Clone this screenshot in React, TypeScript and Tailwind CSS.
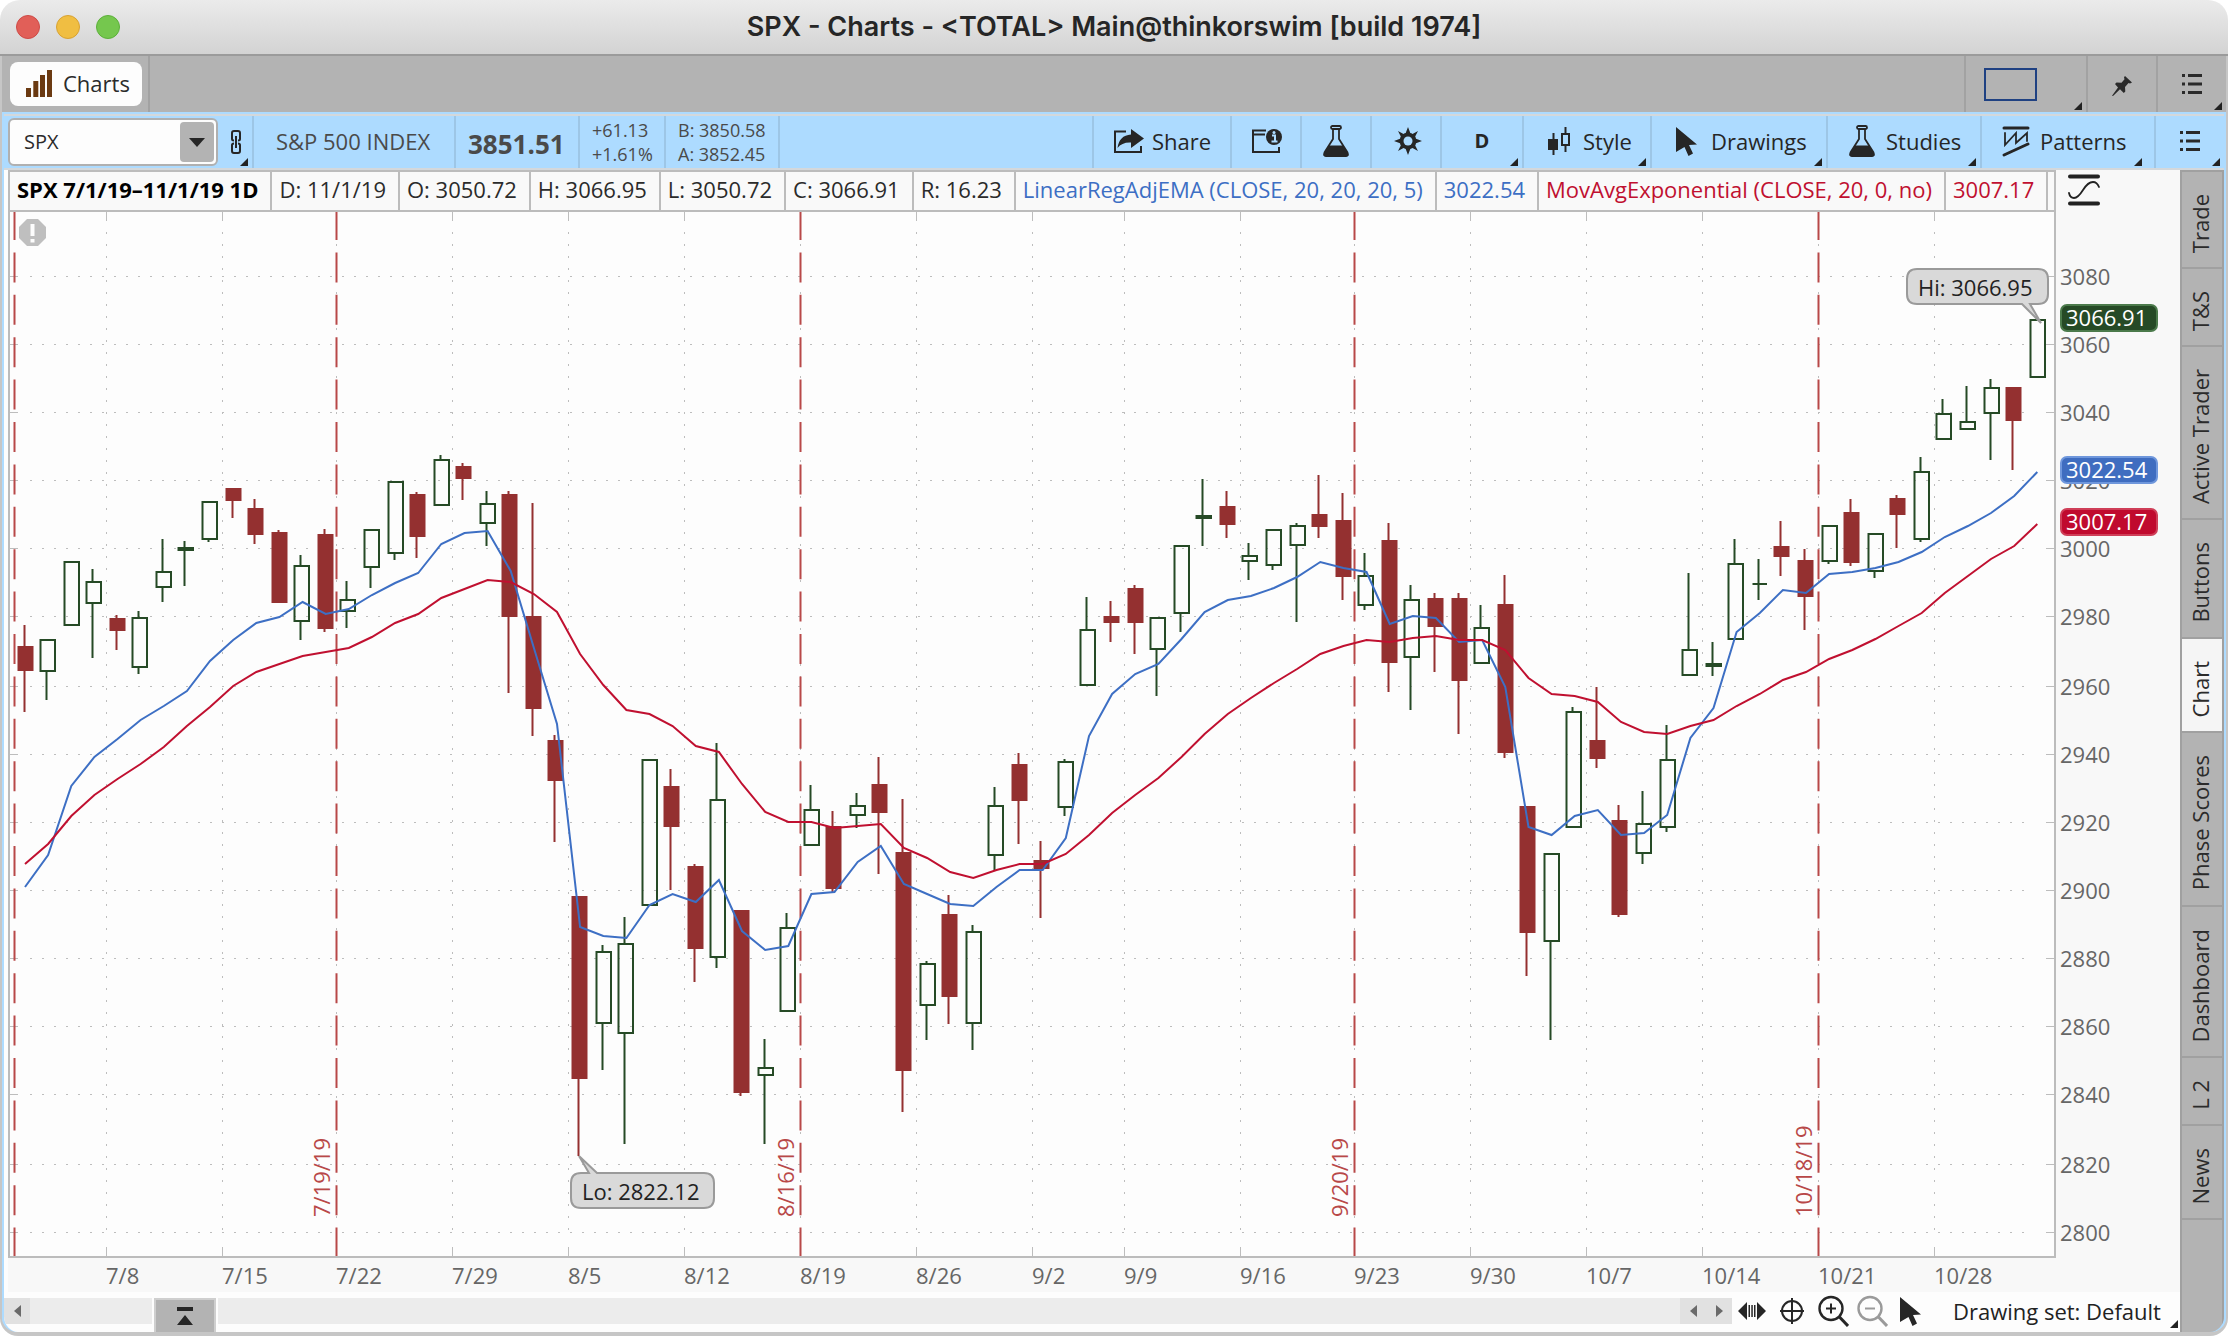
import type { ReactNode } from "react";

type Candle = {
  up: boolean;
  high: number;
  top: number;
  bottom: number;
  low: number;
};

const UP = "#264a26";
const DOWN = "#943030";
const BLUE = "#3d6fc4";
const RED = "#c01030";
const GRID = "#bdbdbd";

// direction, high, body top, body bottom, low (y of the plot)
const RAW: [string, number, number, number, number][] = [
  ["d", 625, 646, 671, 712],
  ["u", 640, 640, 671, 700],
  ["u", 562, 562, 625, 625],
  ["u", 569, 582, 603, 658],
  ["d", 615, 618, 631, 650],
  ["u", 611, 618, 667, 674],
  ["u", 539, 572, 587, 602],
  ["u", 541, 548, 550, 586],
  ["u", 502, 502, 539, 542],
  ["d", 488, 488, 501, 518],
  ["d", 499, 508, 535, 544],
  ["d", 530, 532, 603, 603],
  ["u", 555, 566, 621, 640],
  ["d", 529, 534, 629, 632],
  ["u", 581, 600, 611, 628],
  ["u", 529, 530, 567, 588],
  ["u", 482, 482, 553, 560],
  ["d", 492, 494, 537, 558],
  ["u", 455, 460, 505, 506],
  ["d", 463, 466, 479, 500],
  ["u", 491, 504, 523, 546],
  ["d", 491, 494, 617, 693],
  ["d", 503, 616, 709, 736],
  ["d", 735, 740, 781, 842],
  ["d", 896, 896, 1079, 1156],
  ["u", 945, 952, 1023, 1070],
  ["u", 917, 944, 1033, 1144],
  ["u", 759, 760, 905, 905],
  ["d", 769, 786, 827, 890],
  ["d", 864, 866, 949, 982],
  ["u", 743, 800, 957, 968],
  ["d", 910, 910, 1093, 1096],
  ["u", 1039, 1068, 1075, 1144],
  ["u", 913, 928, 1011, 1011],
  ["u", 785, 810, 845, 845],
  ["d", 811, 826, 889, 892],
  ["u", 793, 806, 815, 828],
  ["d", 757, 784, 813, 874],
  ["d", 799, 852, 1071, 1112],
  ["u", 961, 964, 1005, 1040],
  ["d", 895, 914, 997, 1024],
  ["u", 925, 932, 1023, 1050],
  ["u", 787, 806, 855, 870],
  ["d", 753, 764, 801, 844],
  ["d", 841, 860, 869, 918],
  ["u", 759, 762, 807, 816],
  ["u", 597, 630, 685, 685],
  ["d", 601, 616, 623, 642],
  ["d", 585, 588, 623, 654],
  ["u", 618, 618, 649, 696],
  ["u", 546, 546, 613, 632],
  ["u", 479, 516, 518, 546],
  ["d", 491, 506, 525, 538],
  ["u", 543, 556, 561, 580],
  ["u", 529, 530, 565, 570],
  ["u", 523, 526, 545, 622],
  ["d", 475, 514, 527, 538],
  ["d", 493, 520, 577, 600],
  ["u", 553, 576, 605, 610],
  ["d", 523, 540, 663, 692],
  ["u", 585, 600, 657, 710],
  ["d", 593, 598, 627, 672],
  ["d", 593, 598, 681, 734],
  ["u", 605, 628, 663, 663],
  ["d", 575, 604, 753, 758],
  ["d", 806, 806, 933, 976],
  ["u", 853, 854, 941, 1040],
  ["u", 707, 712, 827, 827],
  ["d", 687, 740, 759, 768],
  ["d", 805, 820, 915, 917],
  ["u", 791, 824, 853, 864],
  ["u", 725, 760, 827, 832],
  ["u", 573, 650, 675, 675],
  ["u", 642, 664, 666, 676],
  ["u", 539, 564, 639, 639],
  ["u", 559, 584, 584, 600],
  ["d", 521, 546, 557, 576],
  ["d", 549, 560, 597, 630],
  ["u", 525, 526, 561, 564],
  ["d", 499, 512, 563, 566],
  ["u", 533, 534, 571, 578],
  ["d", 495, 498, 515, 548],
  ["u", 457, 472, 539, 542],
  ["u", 399, 414, 439, 439],
  ["u", 386, 422, 429, 430],
  ["u", 379, 388, 413, 460],
  ["d", 387, 387, 421, 470],
  ["u", 320, 320, 377, 377],
];

const CANDLES: Candle[] = RAW.map(([dir, high, top, bottom, low]) => ({
  up: dir === "u",
  high,
  top,
  bottom,
  low,
}));

const LINEAR_REG = [
  887, 855, 786, 757, 739, 720, 706, 691, 661, 640, 623, 617, 602, 614, 609, 595, 583, 573, 544, 533, 531, 571,
  648, 724, 927, 936, 938, 905, 894, 902, 880, 931, 950, 946, 894, 892, 862, 846, 884, 894, 904, 906, 887, 870,
  870, 838, 736, 694, 674, 664, 639, 612, 600, 596, 588, 577, 562, 568, 572, 624, 616, 618, 642, 640, 687, 827,
  835, 816, 810, 835, 833, 815, 738, 708, 632, 613, 590, 593, 574, 572, 568, 562, 552, 537, 526, 513, 496, 472,
];

const MOV_AVG = [
  864, 844, 816, 795, 779, 764, 747, 726, 707, 686, 672, 664, 656, 652, 648, 637, 623, 614, 598, 589, 580, 582,
  594, 612, 654, 685, 710, 714, 726, 746, 752, 784, 812, 822, 822, 828, 826, 824, 848, 858, 872, 878, 870, 864,
  864, 854, 835, 813, 795, 778, 757, 734, 714, 698, 683, 669, 654, 646, 640, 642, 638, 636, 640, 640, 650, 678,
  694, 696, 702, 722, 732, 734, 726, 720, 706, 694, 680, 672, 659, 650, 639, 626, 613, 593, 576, 559, 546, 524,
];

const WEEKS: [number, string][] = [
  [106, "7/8"],
  [222, "7/15"],
  [336, "7/22"],
  [452, "7/29"],
  [568, "8/5"],
  [684, "8/12"],
  [800, "8/19"],
  [916, "8/26"],
  [1032, "9/2"],
  [1124, "9/9"],
  [1240, "9/16"],
  [1354, "9/23"],
  [1470, "9/30"],
  [1586, "10/7"],
  [1702, "10/14"],
  [1818, "10/21"],
  [1934, "10/28"],
];

const PRICES: [number, number][] = [
  [3080, 276],
  [3060, 344],
  [3040, 412],
  [3020, 480],
  [3000, 548],
  [2980, 616],
  [2960, 686],
  [2940, 754],
  [2920, 822],
  [2900, 890],
  [2880, 958],
  [2860, 1026],
  [2840, 1094],
  [2820, 1164],
  [2800, 1232],
];

const EXPIRATIONS: [number, string][] = [
  [14, ""],
  [336, "7/19/19"],
  [800, "8/16/19"],
  [1354, "9/20/19"],
  [1818, "10/18/19"],
];

const STATUS = [
  { text: "SPX 7/1/19–11/1/19 1D", className: "font-bold text-black" },
  { text: "D: 11/1/19", className: "text-[#2b2b2b]" },
  { text: "O: 3050.72", className: "text-[#2b2b2b]" },
  { text: "H: 3066.95", className: "text-[#2b2b2b]" },
  { text: "L: 3050.72", className: "text-[#2b2b2b]" },
  { text: "C: 3066.91", className: "text-[#2b2b2b]" },
  { text: "R: 16.23", className: "text-[#2b2b2b]" },
  { text: "LinearRegAdjEMA (CLOSE, 20, 20, 20, 5)", className: "text-[#3d6fc4]" },
  { text: "3022.54", className: "text-[#3d6fc4]" },
  { text: "MovAvgExponential (CLOSE, 20, 0, no)", className: "text-[#c01030]" },
  { text: "3007.17", className: "text-[#c01030]" },
];

const SIDE_TABS = ["Trade", "T&S", "Active Trader", "Buttons", "Chart", "Phase Scores", "Dashboard", "L 2", "News"];

const candleX = (i: number) => Math.floor((24 + i * 23.13) / 2) * 2;

const toPoints = (values: number[]) => values.map((y, i) => `${(25 + i * 23.13).toFixed(1)},${y}`).join(" ");

function Corner({ className = "right-1 bottom-0.5" }: { className?: string }) {
  return (
    <svg className={`absolute size-2 ${className}`} viewBox="0 0 8 8" fill="#222" aria-hidden="true">
      <path d="M8 0V8H0z" />
    </svg>
  );
}

function ListIcon() {
  return (
    <svg width="20" height="20" viewBox="0 0 20 20" fill="#2a2a2a" aria-hidden="true">
      <path d="M0 0h3v3H0zM6 0h14v3H6zM0 8.500h3v3H0zM6 8.500h14v3H6zM0 17h3v3H0zM6 17h14v3H6z" />
    </svg>
  );
}

function FlaskIcon() {
  return (
    <svg width="28" height="32" viewBox="0 0 28 32" fill="none" stroke="#262626" strokeWidth="1.800" aria-hidden="true">
      <rect x="9" y="1" width="10" height="3" rx="1.500" />
      <path d="M11 4v10L2.500 27.500Q1 31 4 31h20q3 0 1.500-3.500L17 14V4" />
      <path d="M7.500 21.500h13l4.500 7q.5 2-1.500 2h-19q-2 0-1.500-2z" fill="#262626" />
    </svg>
  );
}

function PointerIcon() {
  return (
    <svg width="21" height="29" viewBox="0 0 21 29" fill="#262626" aria-hidden="true">
      <path d="M0 0L21 17.500l-8 .5 4 8.500-4.500 2.500-4-9L0 25z" />
    </svg>
  );
}

function ToolButton({
  label,
  width,
  corner,
  cornerClass,
  children,
}: {
  label: string;
  width: string;
  corner?: boolean;
  cornerClass?: string;
  children: ReactNode;
}) {
  return (
    <button
      type="button"
      aria-label={label}
      className={`relative flex shrink-0 items-center border-l-2 border-[#9dc6e6] pb-0.5 text-[#262626] ${width}`}
    >
      {children}
      {corner && <Corner className={cornerClass} />}
    </button>
  );
}

function TitleBar() {
  return (
    <header className="relative flex h-14 items-center justify-center rounded-t-[20px] border-b-2 border-[#9b9b9b] bg-gradient-to-b from-[#ebebeb] to-[#d3d3d3]">
      <div className="absolute left-4 flex gap-4">
        <button type="button" aria-label="Close" className="size-6 rounded-full border border-[#ce4b47] bg-[#e15f58]" />
        <button type="button" aria-label="Minimize" className="size-6 rounded-full border border-[#d8a233] bg-[#f0be42]" />
        <button type="button" aria-label="Zoom" className="size-6 rounded-full border border-[#5cb03a] bg-[#75c74e]" />
      </div>
      <h1 className="font-['Inter',sans-serif] text-[27px] leading-8 font-semibold text-[#262626]">
        SPX - Charts - &lt;TOTAL&gt; Main@thinkorswim [build 1974]
      </h1>
    </header>
  );
}

function TabBar() {
  return (
    <nav className="flex h-14 items-stretch bg-[#b3b3b3]">
      <div className="flex w-[148px] items-center border-r-2 border-[#a2a2a2] pl-2">
        <button
          type="button"
          className="flex h-11 w-[132px] items-center gap-2.5 rounded-lg bg-[#fdfdfd] pb-0.5 pl-4 text-[#2b2b2b]"
        >
          <svg width="27" height="27" viewBox="0 0 27 27" fill="#6b3a12" aria-hidden="true">
            <path d="M0 18h5v9H0zM7.300 11h5v16h-5zM14 5h5v22h-5zM21 0h5v27h-5z" />
          </svg>
          Charts
        </button>
      </div>
      <div className="flex-1" />
      <button type="button" aria-label="Layout" className="relative w-[122px] border-l-2 border-[#a2a2a2] pl-[18px]">
        <svg width="53" height="33" viewBox="0 0 53 33" fill="none" stroke="#1f4182" strokeWidth="2" aria-hidden="true">
          <rect x="1" y="1" width="51" height="31" />
        </svg>
        <Corner />
      </button>
      <button type="button" aria-label="Pin" className="flex w-[70px] items-center justify-center border-l-2 border-[#a2a2a2] pt-1">
        <svg width="20" height="20" viewBox="0 0 20 20" fill="#2a2a2a" aria-hidden="true">
          <path d="M13 0l7 6.500-2 1-1.500-.5-3.500 4 .3 4.500-1.500 1.500L8 13.200 1 20l-1-.3L6 11.500 3 8l1.500-1.500 5 .3 3-3.600-.5-2z" />
        </svg>
      </button>
      <button type="button" aria-label="Menu" className="relative flex w-[70px] items-center justify-center border-l-2 border-[#a2a2a2]">
        <ListIcon />
        <Corner />
      </button>
    </nav>
  );
}

function Toolbar() {
  return (
    <div className="flex h-14 items-stretch border-y-2 border-[#d4d8db] bg-[#addbff]">
      <div className="relative flex w-[250px] shrink-0 items-center border-r-2 border-[#9dc6e6] pl-1">
        <div className="flex h-[48px] w-[210px] items-center rounded-md border-2 border-[#b0b0b0] bg-[#fdfdfd] pr-0.5">
          <input
            aria-label="Symbol"
            defaultValue="SPX"
            className="min-w-0 flex-1 bg-transparent pl-3.5 text-xl text-[#2b2b2b] outline-none"
          />
          <button type="button" aria-label="Symbols" className="flex h-10 w-[34px] items-center justify-center rounded-sm bg-[#b3b3b3]">
            <svg width="16" height="9" viewBox="0 0 16 9" fill="#262626" aria-hidden="true">
              <path d="M0 0h16L8 9z" />
            </svg>
          </button>
        </div>
        <button type="button" aria-label="Link symbol" className="ml-3">
          <svg width="12" height="24" viewBox="0 0 12 24" fill="none" stroke="#262626" strokeWidth="2" aria-hidden="true">
            <path d="M2 9V3q0-2 2-2h4q2 0 2 2v6q0 1.500-2 1.500M4 10.500Q2 10.500 2 9M2 15v6q0 2 2 2h4q2 0 2-2v-6q0-1.500-2-1.500M4 13.500Q2 13.500 2 15M6 6v12" />
          </svg>
        </button>
        <Corner />
      </div>
      <div className="flex w-[202px] shrink-0 items-center border-r-2 border-[#9dc6e6] pb-0.5 pl-[22px] text-[#4a4a4a]">
        S&amp;P 500 INDEX
      </div>
      <div className="flex w-[124px] shrink-0 items-center border-r-2 border-[#9dc6e6] pt-1 pl-3 text-[26px] font-bold text-[#4a4a4a]">
        3851.51
      </div>
      <div className="flex w-[86px] shrink-0 flex-col justify-center border-r-2 border-[#9dc6e6] pl-3 text-lg leading-6 text-[#4a4a4a]">
        <span>+61.13</span>
        <span>+1.61%</span>
      </div>
      <div className="flex w-[114px] shrink-0 flex-col justify-center border-r-2 border-[#9dc6e6] pl-3 text-lg leading-6 text-[#4a4a4a]">
        <span>B: 3850.58</span>
        <span>A: 3852.45</span>
      </div>
      <div className="flex-1" />
      <ToolButton label="Share" width="w-[138px] gap-2 pl-5">
        <svg width="30" height="24" viewBox="0 0 30 24" aria-hidden="true">
          <path d="M12 2.500H1V23h26v-6" fill="none" stroke="#262626" strokeWidth="2" />
          <path d="M17 0l13 9.500L17 19v-5.500Q8 13 3.500 19 5 6.500 17 5.500z" fill="#262626" />
        </svg>
        Share
      </ToolButton>
      <ToolButton label="Symbol info" width="w-[70px] pl-5">
        <svg width="30" height="24" viewBox="0 0 30 24" aria-hidden="true">
          <path d="M14 1.500H1V23h26v-5M1 5.500h12" fill="none" stroke="#262626" strokeWidth="2" />
          <circle cx="22" cy="8" r="8" fill="#262626" />
          <path d="M20 6.500h3v6M19.500 12.500h6" fill="none" stroke="#addbff" strokeWidth="2" />
          <circle cx="22" cy="3.500" r="1.500" fill="#addbff" />
        </svg>
      </ToolButton>
      <ToolButton label="Edit studies" width="w-[70px] pl-5">
        <FlaskIcon />
      </ToolButton>
      <ToolButton label="Settings" width="w-[70px] pl-[22px]">
        <svg width="28" height="28" viewBox="0 0 28 28" aria-hidden="true">
          <path
            d="M14 0l2.300 6q1.200.3 2.200.9L24 4l-2.800 5.500q.6 1 .8 2.200L28 14l-6 2.300q-.2 1.200-.8 2.200L24 24l-5.500-2.900q-1 .6-2.200.9L14 28l-2.300-6q-1.200-.3-2.200-.9L4 24l2.800-5.500q-.6-1-.8-2.200L0 14l6-2.300q.2-1.200.8-2.200L4 4l5.500 2.900q1-.6 2.200-.9z"
            fill="#262626"
          />
          <circle cx="14" cy="14" r="4.500" fill="#addbff" />
        </svg>
      </ToolButton>
      <ToolButton label="Aggregation period: day" width="w-[82px] justify-center" corner>
        <span className="text-xl font-bold">D</span>
      </ToolButton>
      <ToolButton label="Style" width="w-[128px] gap-3 pl-6" corner>
        <svg width="23" height="28" viewBox="0 0 23 28" aria-hidden="true">
          <path d="M5.500 6v22" stroke="#262626" strokeWidth="2" />
          <rect y="12" width="10" height="11" fill="#262626" />
          <path d="M17.500 0v7M17.500 18v7M14 7h7v11h-7z" fill="none" stroke="#262626" strokeWidth="2" />
        </svg>
        Style
      </ToolButton>
      <ToolButton label="Drawings" width="w-[176px] gap-3.5 pl-6" corner>
        <PointerIcon />
        Drawings
      </ToolButton>
      <ToolButton label="Studies" width="w-[154px] gap-2.5 pl-5" corner>
        <FlaskIcon />
        Studies
      </ToolButton>
      <ToolButton label="Patterns" width="w-[174px] gap-2.5 pl-5" corner cornerClass="right-3 bottom-0.5">
        <svg width="28" height="32" viewBox="0 0 28 32" fill="none" stroke="#262626" strokeLinecap="round" aria-hidden="true">
          <path d="M2 3h24M2 30l24-11" strokeWidth="3" />
          <path d="M3 8v12L14 8v10L25 8v8" strokeWidth="1.800" />
        </svg>
        Patterns
      </ToolButton>
      <ToolButton label="Chart menu" width="w-[70px] pl-6" corner>
        <ListIcon />
      </ToolButton>
    </div>
  );
}

function StatusRow() {
  return (
    <div className="flex bg-[#f8f8f8]">
      <div className="w-1 bg-[#fdfdfd]" />
      <div className="flex h-[42px] min-w-0 flex-1 items-stretch border-2 border-[#bcbcbc] bg-[#f9f9f9]">
        {STATUS.map((cell) => (
          <div
            key={cell.text}
            className={`flex shrink-0 items-center border-r-2 border-[#bcbcbc] pr-3 pb-1 pl-[7px] whitespace-nowrap ${cell.className}`}
          >
            {cell.text}
          </div>
        ))}
      </div>
      <button type="button" aria-label="Pattern preview" className="w-[124px] pb-0.5 pl-3">
        <svg width="32" height="32" viewBox="0 0 32 32" fill="none" stroke="#222" strokeLinecap="round" aria-hidden="true">
          <path d="M2 2.500h28M2 29.500h28" strokeWidth="4" />
          <path d="M1 19q1 5 5 5 4 0 9-8t10-8q4 0 6 5" strokeWidth="1.800" />
        </svg>
      </button>
    </div>
  );
}

function PriceBadge({ y, fill, edge, text }: { y: number; fill: string; edge: string; text: string }) {
  return (
    <g>
      <rect x="2061" y={y} width="96" height="26" rx="6" fill={fill} stroke={edge} strokeWidth="2" />
      <text x="2066" y={y + 21} fill="#fff">
        {text}
      </text>
    </g>
  );
}

function PriceChart() {
  return (
    <svg
      viewBox="4 212 2176 1080"
      className="block w-full font-['Open_Sans',sans-serif]"
      fontSize="22"
      role="img"
      aria-label="SPX daily candles with two studies"
    >
      <rect x="4" y="212" width="2176" height="1080" fill="#f8f8f8" />
      <rect x="4" y="212" width="4" height="1080" fill="#fdfdfd" />
      <rect x="10" y="212" width="2044" height="1044" fill="#fdfdfd" />

      <g stroke={GRID} strokeWidth="1">
        {PRICES.map(([price, y]) => (
          <g key={price}>
            <path d={`M10 ${y + 0.5}h8M2046 ${y + 0.5}h8`} />
            <path d={`M30 ${y + 0.5}H2026`} strokeDasharray="2 10" />
          </g>
        ))}
        {WEEKS.map(([x, label]) => (
          <g key={label}>
            <path d={`M${x + 0.5} 212v9M${x + 0.5} 1247v9`} />
            <path d={`M${x + 0.5} 232V1232`} strokeDasharray="2 10" />
          </g>
        ))}
      </g>

      {EXPIRATIONS.map(([x, label]) => (
        <g key={x}>
          <path d={`M${x + 0.5} 212V1256`} stroke="#b84848" strokeWidth="2" strokeDasharray="30 12.400" strokeDashoffset="2" />
          <text transform={`translate(${x - 6} 1217) rotate(-90)`} fill="#b84848">
            {label}
          </text>
        </g>
      ))}

      {CANDLES.map((c, i) => {
        const x = candleX(i);
        const color = c.up ? UP : DOWN;
        return (
          <g key={i} stroke={color} strokeWidth="2" fill="none">
            <path d={`M${x + 0.5} ${c.high}V${c.top}M${x + 0.5} ${c.bottom}V${c.low}`} />
            {c.up ? (
              <path d={`M${x - 5.5} ${c.top}h14.500V${c.bottom}h-14.500z`} />
            ) : (
              <rect x={x - 6.5} y={c.top} width="16" height={c.bottom - c.top} fill={color} stroke="none" />
            )}
          </g>
        );
      })}

      <polyline points={toPoints(LINEAR_REG)} fill="none" stroke={BLUE} strokeWidth="2" />
      <polyline points={toPoints(MOV_AVG)} fill="none" stroke={RED} strokeWidth="2" />

      <path d="M9 212V1257H2055V212" fill="none" stroke="#bcbcbc" strokeWidth="2" />

      <g fill="#666">
        {PRICES.map(([price, y]) => (
          <text key={price} x="2060" y={y + 9}>
            {price}
          </text>
        ))}
        {WEEKS.map(([x, label]) => (
          <text key={label} x={x} y="1284">
            {label}
          </text>
        ))}
      </g>

      <PriceBadge y={305} fill="#264a26" edge="#4b7a4b" text="3066.91" />
      <PriceBadge y={457} fill="#3f6dc0" edge="#6f97dc" text="3022.54" />
      <PriceBadge y={509} fill="#c00a2e" edge="#cf3f58" text="3007.17" />

      <g fill="#d9d9d9" stroke="#9a9a9a" strokeWidth="2">
        <path d="M1917 269H2038q10 0 10 10V294q0 10-10 10H2030L2041 323 2022 304H1917q-10 0-10-10V279q0-10 10-10z" />
        <path d="M581 1173H589L579 1156 597 1173H704q10 0 10 10V1198q0 10-10 10H581q-10 0-10-10V1183q0-10 10-10z" />
      </g>
      <text x="1918" y="296" fill="#222">
        Hi: 3066.95
      </text>
      <text x="582" y="1200" fill="#222">
        Lo: 2822.12
      </text>

      <path d="M27 219h11l8 8v11l-8 8H27l-8-8V227z" fill="#bfbfbf" />
      <path d="M32.500 224V236M32.500 239V242.500" stroke="#fdfdfd" strokeWidth="4" />
    </svg>
  );
}

function BottomBar() {
  return (
    <footer className="flex h-10 items-stretch bg-[#fdfdfd]">
      <div className="flex flex-1 items-start pt-1.5">
        <button type="button" aria-label="Scroll left" className="flex h-[26px] w-[26px] items-center justify-center bg-[#e1e1e1]">
          <svg width="7" height="12" viewBox="0 0 7 12" fill="#6a6a6a" aria-hidden="true">
            <path d="M7 0v12L0 6z" />
          </svg>
        </button>
        <div className="h-[26px] w-[122px] bg-[#ececec]" />
        <button
          type="button"
          aria-label="Expand panel"
          className="mx-0.5 flex h-[34px] w-[62px] items-center justify-center border-2 border-b-0 border-[#cfcfcf] bg-[#b3b3b3]"
        >
          <svg width="16" height="18" viewBox="0 0 16 18" fill="#262626" aria-hidden="true">
            <path d="M0 0h16v4H0zM8 8l8 10H0z" />
          </svg>
        </button>
        <div className="h-[26px] flex-1 bg-[#ececec]" />
        <div className="flex h-[26px] w-[52px] items-center justify-around bg-[#e1e1e1]">
          <button type="button" aria-label="Previous">
            <svg width="7" height="12" viewBox="0 0 7 12" fill="#6a6a6a" aria-hidden="true">
              <path d="M7 0v12L0 6z" />
            </svg>
          </button>
          <button type="button" aria-label="Next">
            <svg width="7" height="12" viewBox="0 0 7 12" fill="#6a6a6a" aria-hidden="true">
              <path d="M0 0v12l7-6z" />
            </svg>
          </button>
        </div>
      </div>
      <div className="relative flex w-[448px] items-center pb-0.5 pl-1.5 text-[#222]">
        <button type="button" aria-label="Pan" className="mr-3.5">
          <svg width="28" height="18" viewBox="0 0 28 18" fill="#262626" aria-hidden="true">
            <path d="M9 0v18L0 9zM19 0v18l9-9zM10.500 3h1.500v12h-1.500zM13.300 3h1.500v12h-1.500zM16 3h1.500v12H16z" />
          </svg>
        </button>
        <button type="button" aria-label="Crosshair" className="mr-3.5">
          <svg width="24" height="26" viewBox="0 0 24 26" fill="none" stroke="#262626" strokeWidth="2" aria-hidden="true">
            <circle cx="12" cy="13" r="10" />
            <path d="M12 0v26M0 13h24" />
          </svg>
        </button>
        <button type="button" aria-label="Zoom in" className="mr-2">
          <svg width="31" height="32" viewBox="0 0 31 32" fill="none" stroke="#262626" strokeWidth="2.400" aria-hidden="true">
            <circle cx="13" cy="13.500" r="11.500" />
            <path d="M21 21.500l9 9.500" strokeWidth="3" />
            <path d="M8 13.500h10M13 8.500v10" strokeWidth="2" />
          </svg>
        </button>
        <button type="button" aria-label="Zoom out" className="mr-3">
          <svg width="31" height="32" viewBox="0 0 31 32" fill="none" stroke="#9a9a9a" strokeWidth="2.400" aria-hidden="true">
            <circle cx="13" cy="13.500" r="11.500" />
            <path d="M21 21.500l9 9.500" strokeWidth="3" />
            <path d="M8 13.500h10" strokeWidth="2" />
          </svg>
        </button>
        <button type="button" aria-label="Pointer" className="mr-8">
          <PointerIcon />
        </button>
        <button type="button" className="whitespace-nowrap">
          Drawing set: Default
        </button>
        <Corner className="right-0.5 bottom-1" />
      </div>
    </footer>
  );
}

function SideTabs() {
  return (
    <aside className="flex w-11 shrink-0 flex-col border-2 border-b-0 border-[#a0a0a0] bg-[#b3b3b3]">
      {SIDE_TABS.map((tab) => (
        <button
          key={tab}
          type="button"
          className={`flex items-center justify-center border-b-2 border-[#a0a0a0] pt-[22px] pr-1 pb-3.5 text-[#2b2b2b] ${
            tab === "Chart" ? "bg-[#f5f5f5]" : ""
          }`}
        >
          <span className="rotate-180 whitespace-nowrap [writing-mode:vertical-rl]">{tab}</span>
        </button>
      ))}
    </aside>
  );
}

export default function App() {
  return (
    <div className="min-h-screen bg-white font-['Open_Sans',sans-serif] text-[22px] leading-[30px]">
      <TitleBar />
      <div className="rounded-b-[18px] border-x-2 border-b-4 border-[#c6c6c6] bg-[#addbff]">
        <TabBar />
        <div className="overflow-hidden rounded-b-2xl border-x-2 border-t-2 border-[#addbff]">
          <Toolbar />
          <div className="flex items-stretch">
            <main className="min-w-0 flex-1">
              <StatusRow />
              <PriceChart />
              <BottomBar />
            </main>
            <SideTabs />
          </div>
        </div>
      </div>
    </div>
  );
}
